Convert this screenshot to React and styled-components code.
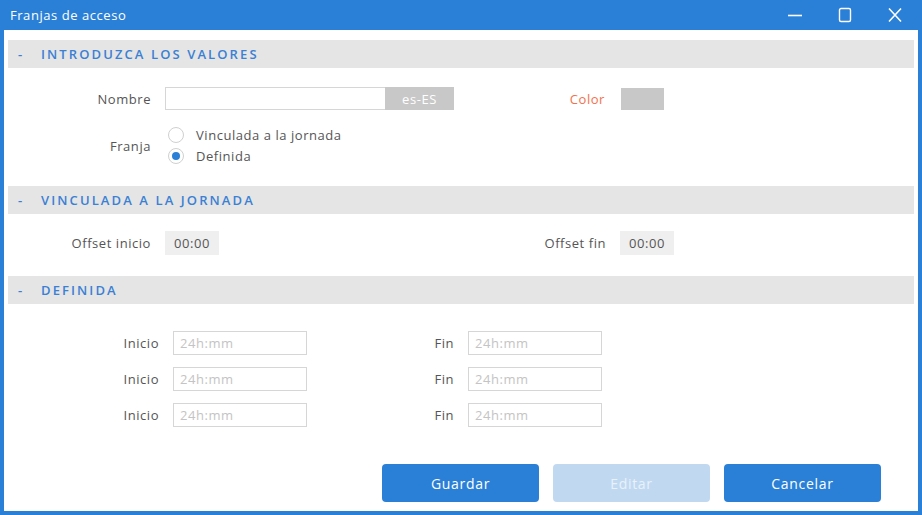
import React, { useState } from "react";
import styled, { createGlobalStyle } from "styled-components";

const GlobalStyle = createGlobalStyle`
  html, body { margin: 0; padding: 0; background: #fff; }
  body { font-family: "Open Sans", "Liberation Sans", sans-serif; }
  * { box-sizing: border-box; }
`;

const BLUE = "#2a7fd6";

function Window() {
  const [franja, setFranja] = useState("definida");

  return (
    <Frame>
      <TitleBar>
        <Title>Franjas de acceso</Title>
        <Controls>
          <CtrlButton aria-label="minimizar">
            <svg width="16" height="16" viewBox="0 0 16 16">
              <path d="M1 8.5h14" stroke="#fff" strokeWidth="1.6" />
            </svg>
          </CtrlButton>
          <CtrlButton aria-label="maximizar">
            <svg width="16" height="16" viewBox="0 0 16 16">
              <rect x="2.5" y="1.5" width="11" height="13" rx="1.5" fill="none" stroke="#fff" strokeWidth="1.4" />
            </svg>
          </CtrlButton>
          <CtrlButton aria-label="cerrar">
            <svg width="16" height="16" viewBox="0 0 16 16">
              <path d="M2 1.5l12 13M14 1.5l-12 13" stroke="#fff" strokeWidth="1.6" />
            </svg>
          </CtrlButton>
        </Controls>
      </TitleBar>

      <Content>
        <SectionHeader>
          <Dash>-</Dash>Introduzca los valores
        </SectionHeader>
        <Body $pt={19} $pb={21}>
          <Row>
            <Label $w={143}>Nombre</Label>
            <LangInput>
              <TextField />
              <LangTag>es-ES</LangTag>
            </LangInput>
            <Label $w={151} $accent>Color</Label>
            <Swatch />
          </Row>
          <Row $mt={16}>
            <Label $w={143}>Franja</Label>
            <RadioGroup>
              <RadioRow onClick={() => setFranja("vinculada")}>
                <Radio $checked={franja === "vinculada"} />
                Vinculada a la jornada
              </RadioRow>
              <RadioRow onClick={() => setFranja("definida")}>
                <Radio $checked={franja === "definida"} />
                Definida
              </RadioRow>
            </RadioGroup>
          </Row>
        </Body>

        <SectionHeader>
          <Dash>-</Dash>Vinculada a la jornada
        </SectionHeader>
        <Body $pt={17} $pb={21}>
          <Row>
            <Label $w={143}>Offset inicio</Label>
            <TimeBox>00:00</TimeBox>
            <Label $w={387}>Offset fin</Label>
            <TimeBox>00:00</TimeBox>
          </Row>
        </Body>

        <SectionHeader>
          <Dash>-</Dash>Definida
        </SectionHeader>
        <Body $pt={27} $pb={0}>
          {[0, 1, 2].map((i) => (
            <Row key={i} $mt={i ? 12 : 0}>
              <Label $w={151}>Inicio</Label>
              <HourInput placeholder="24h:mm" />
              <Label $w={147}>Fin</Label>
              <HourInput placeholder="24h:mm" />
            </Row>
          ))}
        </Body>

        <Footer>
          <Button>Guardar</Button>
          <Button disabled>Editar</Button>
          <Button>Cancelar</Button>
        </Footer>
      </Content>
    </Frame>
  );
}

const Frame = styled.div`
  width: 922px;
  height: 515px;
  background: ${BLUE};
  padding: 0 4px 4px 4px;
  display: flex;
  flex-direction: column;
  letter-spacing: 0.55px;
`;

const TitleBar = styled.div`
  height: 30px;
  display: flex;
  align-items: center;
  justify-content: space-between;
  color: #fff;
`;

const Title = styled.div`
  font-size: 13px;
  padding-left: 6px;
`;

const Controls = styled.div`
  display: flex;
  gap: 34px;
  padding-right: 15px;
`;

const CtrlButton = styled.button`
  width: 16px;
  height: 16px;
  padding: 0;
  border: 0;
  background: transparent;
  display: flex;
`;

const Content = styled.div`
  flex: 1;
  background: #fff;
  padding: 10px 4px 0 4px;
  display: flex;
  flex-direction: column;
`;

const SectionHeader = styled.div`
  height: 28px;
  flex-shrink: 0;
  background: #e5e5e5;
  display: flex;
  align-items: center;
  padding-left: 10px;
  color: #3a80d4;
  font-size: 13px;
  font-weight: 600;
  letter-spacing: 2.1px;
  text-transform: uppercase;
`;

const Dash = styled.span`
  width: 23px;
`;

const Body = styled.div`
  padding-top: ${(p) => p.$pt}px;
  padding-bottom: ${(p) => p.$pb}px;
  display: flex;
  flex-direction: column;
`;

const Row = styled.div`
  display: flex;
  align-items: center;
  margin-top: ${(p) => p.$mt || 0}px;
`;

const Label = styled.div`
  width: ${(p) => p.$w}px;
  text-align: right;
  padding-right: 14px;
  box-sizing: content-box;
  font-size: 13px;
  color: ${(p) => (p.$accent ? "#f2714d" : "#555")};
  flex-shrink: 0;
`;

const LangInput = styled.div`
  width: 289px;
  height: 23px;
  display: flex;
  border: 1px solid #d6d6d6;
`;

const TextField = styled.input`
  flex: 1;
  min-width: 0;
  border: 0;
  outline: none;
`;

const LangTag = styled.div`
  width: 69px;
  margin: -1px -1px -1px 0;
  background: #c8c8c8;
  color: #fff;
  font-size: 13px;
  display: flex;
  align-items: center;
  justify-content: center;
`;

const Swatch = styled.div`
  width: 43px;
  height: 22px;
  margin-left: 2px;
  background: #c8c8c8;
`;

const RadioGroup = styled.div`
  display: flex;
  flex-direction: column;
  gap: 3px;
  padding-left: 3px;
`;

const RadioRow = styled.label`
  height: 18px;
  display: flex;
  align-items: center;
  gap: 12px;
  font-size: 13px;
  color: #555;
  cursor: pointer;
`;

const Radio = styled.span`
  width: 16px;
  height: 16px;
  border-radius: 50%;
  border: 1px solid #d0d0d0;
  display: flex;
  align-items: center;
  justify-content: center;
  &::after {
    content: "";
    width: 8px;
    height: 8px;
    border-radius: 50%;
    background: ${(p) => (p.$checked ? BLUE : "transparent")};
  }
`;

const TimeBox = styled.div`
  width: 54px;
  height: 24px;
  background: #efefef;
  color: #555;
  font-size: 13px;
  display: flex;
  align-items: center;
  justify-content: center;
`;

const HourInput = styled.input`
  width: 134px;
  height: 24px;
  border: 1px solid #d6d6d6;
  padding: 0 6px;
  font-family: inherit;
  font-size: 13px;
  letter-spacing: 0.55px;
  outline: none;
  &::placeholder {
    color: #c4c4c4;
  }
`;

const Footer = styled.div`
  margin-top: auto;
  padding: 0 33px 9px 0;
  display: flex;
  justify-content: flex-end;
  gap: 14px;
`;

const Button = styled.button`
  width: 157px;
  height: 38px;
  border: 0;
  border-radius: 4px;
  background: ${BLUE};
  color: #fff;
  font-family: inherit;
  font-size: 14px;
  letter-spacing: 0.7px;
  &:disabled {
    background: #c0d9f1;
    color: #e9f1fa;
  }
`;

export default function App() {
  return (
    <>
      <GlobalStyle />
      <Window />
    </>
  );
}
